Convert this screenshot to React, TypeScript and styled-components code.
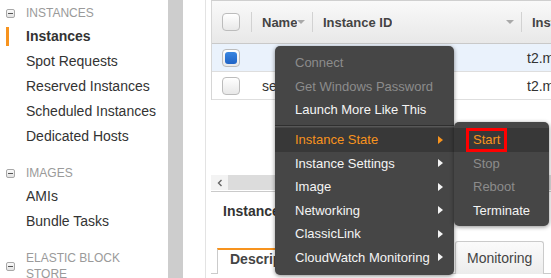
import React from "react";
import styled, { createGlobalStyle } from "styled-components";

const Global = createGlobalStyle`
  html, body { margin: 0; padding: 0; background: #fff; }
  body { font-family: "Liberation Sans", Arial, sans-serif; }
  * { box-sizing: border-box; }
`;

const Page = styled.div`
  position: relative;
  display: flex;
  width: 551px;
  height: 278px;
  overflow: hidden;
  color: #333;
  font-family: "Liberation Sans", Arial, sans-serif;
`;

/* ---------- Sidebar ---------- */
const Sidebar = styled.nav`
  width: 168px;
  flex: none;
  padding-top: 3px;
`;

const Section = styled.div`
  & + & { margin-top: 14px; }
`;

const SectionHeader = styled.div`
  display: flex;
  align-items: center;
  gap: 11px;
  padding: 2px 0 3px 6px;
  font-size: 12px;
  line-height: 16px;
  color: #9a9a9a;
  text-transform: uppercase;
`;

const HeaderText = styled.span`
  max-width: 110px;
`;

const Collapse = styled.span`
  flex: none;
  width: 9px;
  height: 9px;
  border: 1px solid #a8a8a8;
  border-radius: 2px;
  background: linear-gradient(#fafafa, #e2e2e2);
  display: flex;
  align-items: center;
  justify-content: center;
  &::after {
    content: "";
    width: 5px;
    height: 1px;
    background: #555;
  }
`;

const NavItem = styled.div<{ $active?: boolean }>`
  margin-left: 6px;
  padding-left: 20px;
  height: 25px;
  line-height: 25px;
  font-size: 14px;
  color: #333;
  white-space: nowrap;
  font-weight: ${(p) => (p.$active ? "bold" : "normal")};
  background: ${(p) =>
    p.$active ? "linear-gradient(#f7931e, #f7931e) no-repeat 0 center / 3px 19px" : "none"};
`;

const Splitter = styled.div`
  width: 15px;
  flex: none;
  background: #cdcdcd;
`;

/* ---------- Main ---------- */
const Main = styled.main`
  flex: 1;
  min-width: 0;
  display: flex;
  flex-direction: column;
  margin-left: 22px;
  border-left: 1px solid #e3e3e3;
  padding-left: 5px;
`;

const Table = styled.div`
  border-left: 1px solid #d6d6d6;
  border-top: 1px solid #cfcfcf;
  width: 420px;
`;

const cols = "39px 61px 209px 1fr";

const HeaderRow = styled.div`
  display: grid;
  grid-template-columns: ${cols};
  height: 43px;
  background: linear-gradient(#f9f9f9, #e8e8e8);
  border-bottom: 1px solid #c9c9c9;
`;

const HeadCell = styled.div<{ $pad?: number }>`
  display: flex;
  align-items: center;
  min-width: 0;
  overflow: hidden;
  padding-left: ${(p) => p.$pad ?? 0}px;
  font-weight: bold;
  font-size: 13px;
  color: #444;
  white-space: nowrap;
`;

const Sep = styled.span`
  flex: none;
  width: 1px;
  height: 20px;
  background: #d2d2d2;
  margin-right: 10px;
`;

const Label = styled.span`
  overflow: hidden;
`;

const Caret = styled.span`
  flex: none;
  margin-left: auto;
  margin-right: 7px;
  border-left: 4px solid transparent;
  border-right: 4px solid transparent;
  border-top: 4px solid #a9a9a9;
`;

const Row = styled.div<{ $bg: string }>`
  display: grid;
  grid-template-columns: ${cols};
  height: 28px;
  background: ${(p) => p.$bg};
  border-bottom: 1px solid #dedede;
`;

const Cell = styled.div<{ $pad?: number }>`
  display: flex;
  align-items: center;
  padding-left: ${(p) => p.$pad ?? 0}px;
  font-size: 14px;
  color: #333;
  white-space: nowrap;
  overflow: hidden;
`;

const Checkbox = styled.span<{ $checked?: boolean }>`
  width: 18px;
  height: 18px;
  border: 1px solid #bcbcbc;
  border-radius: 4px;
  background: linear-gradient(#ffffff, #e8e8e8);
  padding: 2px;
  display: flex;
  &::after {
    content: "";
    flex: 1;
    border-radius: 3px;
    background: ${(p) => (p.$checked ? "linear-gradient(#3a86e0, #1f63c6)" : "transparent")};
  }
`;

const Footer = styled.div`
  margin-top: 75px;
  padding-bottom: 1px;
  border-bottom: 1px solid #cacaca;
`;

const Scrollbar = styled.div`
  display: flex;
  height: 15px;
`;

const ScrollBtn = styled.div`
  width: 17px;
  flex: none;
  background: #f3f3f3;
  display: flex;
  align-items: center;
  justify-content: center;
`;

const ScrollTrack = styled.div`
  flex: 1;
  background: #dcdcdc;
`;

const DetailsTitle = styled.div`
  margin-top: 11px;
  padding-left: 12px;
  font-weight: bold;
  font-size: 14px;
  line-height: 17px;
  color: #333;
  white-space: nowrap;
`;

const TabBar = styled.div`
  margin-top: 21px;
  display: flex;
  align-items: flex-start;
  gap: 2px;
  height: 33px;
  padding-left: 6px;
  border-bottom: 1px solid #cbcbcb;
`;

const Tab = styled.div<{ $active?: boolean; $w?: number }>`
  flex: none;
  width: ${(p) => (p.$w ? `${p.$w}px` : "auto")};
  height: ${(p) => (p.$active ? 26 : 33)}px;
  margin-top: ${(p) => (p.$active ? 7 : 0)}px;
  padding: ${(p) => (p.$active ? "1px 12px 0 12px" : "8px 11px 0 11px")};
  border: 1px solid #cbcbcb;
  border-top: ${(p) => (p.$active ? "2px solid #f7931e" : "1px solid #cbcbcb")};
  border-bottom: none;
  border-radius: ${(p) => (p.$active ? "0" : "3px 3px 0 0")};
  background: ${(p) => (p.$active ? "#fff" : "linear-gradient(#fbfbfb, #ececec)")};
  font-size: 14px;
  line-height: 17px;
  font-weight: ${(p) => (p.$active ? "bold" : "normal")};
  color: #444;
  white-space: nowrap;
`;

/* ---------- Context menu ---------- */
const Menu = styled.div<{ $left: number; $top: number; $w: number }>`
  position: absolute;
  left: ${(p) => p.$left}px;
  top: ${(p) => p.$top}px;
  width: ${(p) => p.$w}px;
  background: #464646;
  border-radius: 5px;
  box-shadow: 0 1px 4px rgba(0, 0, 0, 0.45);
`;

const MainMenu = styled(Menu)`
  padding: 5px 0 6px;
`;

const SubMenu = styled(Menu)`
  padding: 6px 0 4px;
`;

type ItemState = "normal" | "disabled" | "hot";

const MenuItem = styled.div<{ $state: ItemState; $pad?: number }>`
  display: flex;
  align-items: center;
  height: 23.5px;
  padding-left: ${(p) => p.$pad ?? 20}px;
  font-size: 13px;
  white-space: nowrap;
  color: ${(p) => (p.$state === "disabled" ? "#8c8c8c" : p.$state === "hot" ? "#f7931e" : "#f4f4f4")};
  background: ${(p) => (p.$state === "hot" ? "#383838" : "transparent")};
`;

const Arrow = styled.span`
  margin-left: auto;
  margin-right: 11px;
  border-left: 5px solid currentColor;
  border-top: 4.5px solid transparent;
  border-bottom: 4.5px solid transparent;
`;

const MenuSep = styled.div`
  margin: 3px 0 1.5px;
  border-top: 1px solid #2f2f2f;
  border-bottom: 1px solid #575757;
`;

const Highlight = styled.span`
  display: inline-block;
  border: 3px solid #ff0000;
  padding: 0 4px 0 4px;
  line-height: 18px;
`;

const topItems: { label: string; state: ItemState }[] = [
  { label: "Connect", state: "disabled" },
  { label: "Get Windows Password", state: "disabled" },
  { label: "Launch More Like This", state: "normal" },
];

const subItems: { label: string; state: ItemState }[] = [
  { label: "Instance State", state: "hot" },
  { label: "Instance Settings", state: "normal" },
  { label: "Image", state: "normal" },
  { label: "Networking", state: "normal" },
  { label: "ClassicLink", state: "normal" },
  { label: "CloudWatch Monitoring", state: "normal" },
];

export default function App() {
  return (
    <>
      <Global />
      <Page>
        <Sidebar>
          <Section>
            <SectionHeader>
              <Collapse />
              <HeaderText>Instances</HeaderText>
            </SectionHeader>
            <NavItem $active>Instances</NavItem>
            <NavItem>Spot Requests</NavItem>
            <NavItem>Reserved Instances</NavItem>
            <NavItem>Scheduled Instances</NavItem>
            <NavItem>Dedicated Hosts</NavItem>
          </Section>
          <Section>
            <SectionHeader>
              <Collapse />
              <HeaderText>Images</HeaderText>
            </SectionHeader>
            <NavItem>AMIs</NavItem>
            <NavItem>Bundle Tasks</NavItem>
          </Section>
          <Section>
            <SectionHeader>
              <Collapse />
              <HeaderText>Elastic Block Store</HeaderText>
            </SectionHeader>
            <NavItem>Volumes</NavItem>
          </Section>
        </Sidebar>
        <Splitter />
        <Main>
          <Table>
            <HeaderRow>
              <HeadCell $pad={10}>
                <Checkbox />
              </HeadCell>
              <HeadCell>
                <Sep />
                <Label>Name</Label>
                <Caret />
              </HeadCell>
              <HeadCell>
                <Sep />
                <Label>Instance ID</Label>
                <Caret />
              </HeadCell>
              <HeadCell>
                <Sep />
                <Label>Instance Type</Label>
              </HeadCell>
            </HeaderRow>
            <Row $bg="#eaf2fc">
              <Cell $pad={10}>
                <Checkbox $checked />
              </Cell>
              <Cell $pad={11}></Cell>
              <Cell $pad={11}>i-0a1b2c3d</Cell>
              <Cell $pad={6}>t2.micro</Cell>
            </Row>
            <Row $bg="#ffffff">
              <Cell $pad={10}>
                <Checkbox />
              </Cell>
              <Cell $pad={11}>server</Cell>
              <Cell $pad={11}>i-0e4f5a6b</Cell>
              <Cell $pad={6}>t2.micro</Cell>
            </Row>
          </Table>
          <Footer>
            <Scrollbar>
              <ScrollBtn>
                <svg width="6" height="8" viewBox="0 0 6 8">
                  <polyline points="4.5,1 1.5,4 4.5,7" fill="none" stroke="#666" strokeWidth="1.4" />
                </svg>
              </ScrollBtn>
              <ScrollTrack />
            </Scrollbar>
          </Footer>
          <DetailsTitle>Instance: i-0a1b2c3d</DetailsTitle>
          <TabBar>
            <Tab $active $w={103}>Description</Tab>
            <Tab $w={131}>Status Checks</Tab>
            <Tab>Monitoring</Tab>
          </TabBar>
        </Main>

        <MainMenu $left={275} $top={46} $w={179}>
          {topItems.map((it) => (
            <MenuItem key={it.label} $state={it.state}>
              {it.label}
            </MenuItem>
          ))}
          <MenuSep />
          {subItems.map((it) => (
            <MenuItem key={it.label} $state={it.state}>
              {it.label}
              <Arrow />
            </MenuItem>
          ))}
        </MainMenu>

        <SubMenu $left={454} $top={122} $w={95}>
          <MenuItem $state="hot" $pad={12}>
            <Highlight>Start</Highlight>
          </MenuItem>
          <MenuItem $state="disabled" $pad={19}>Stop</MenuItem>
          <MenuItem $state="disabled" $pad={19}>Reboot</MenuItem>
          <MenuItem $state="normal" $pad={19}>Terminate</MenuItem>
        </SubMenu>
      </Page>
    </>
  );
}
